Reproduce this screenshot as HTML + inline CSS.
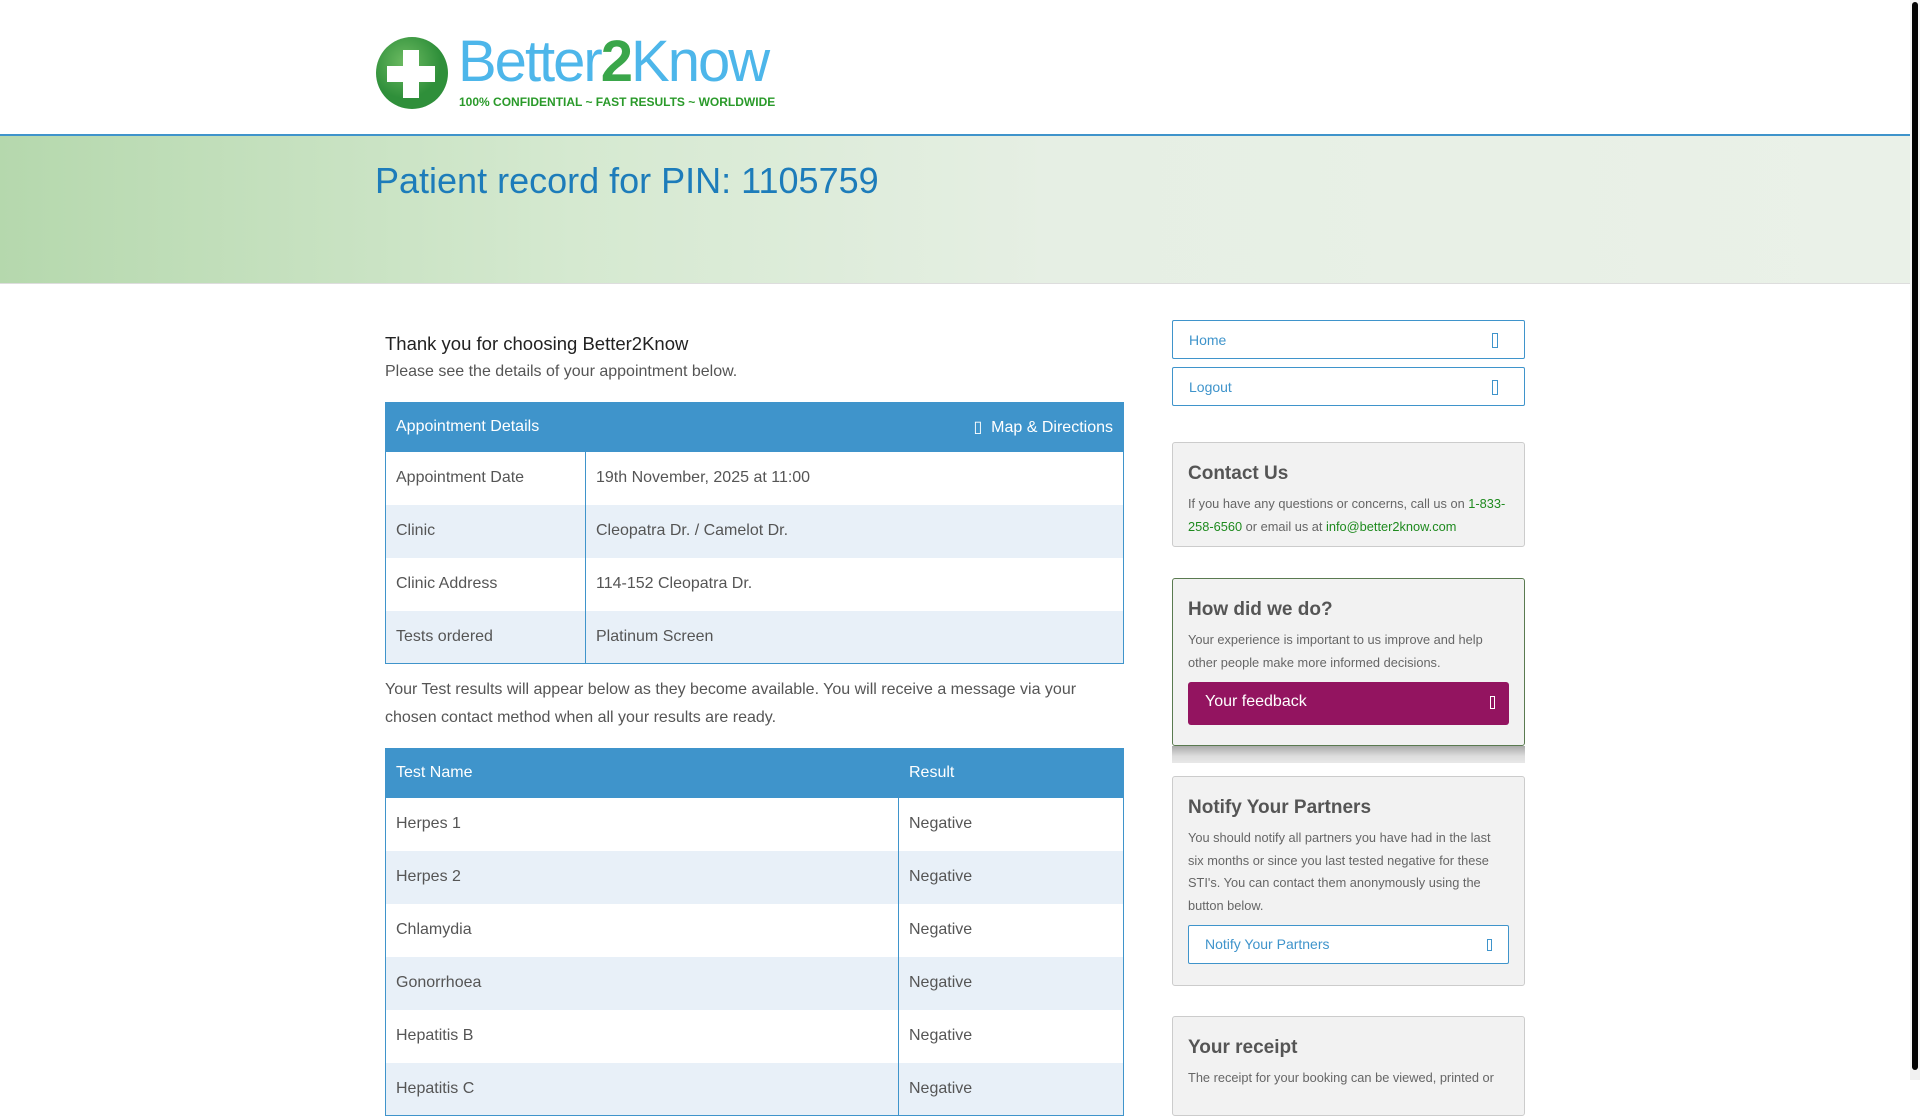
<!DOCTYPE html>
<html><head><meta charset="utf-8"><style>
*{box-sizing:border-box;margin:0;padding:0}
body{width:1920px;height:1080px;overflow:hidden;background:#fff;font-family:"Liberation Sans",Arial,sans-serif;color:#555;position:relative}
.a{position:absolute}
.sb{position:absolute;right:0;top:0;width:10px;height:1080px;background:#f1f1f1}
.sb div{position:absolute;left:2px;top:2px;width:6px;height:1068px;background:#000;border-radius:3px}
.banner{left:0;top:134px;width:1910px;height:150px;border-top:2px solid #3f94cb;border-bottom:1px solid #ddd;background:linear-gradient(90deg,#b5d8ad 0%,#d5e9d0 30%,#e6efe4 55%,#eaf1e8 100%)}
h1{position:absolute;left:375px;top:160px;font-weight:normal;font-size:36px;color:#1d7cba}
table{position:absolute;border-collapse:collapse;left:385px;width:739px;font-size:16px;color:#555}
td,th{border-left:1px solid #3f94cb;border-right:1px solid #3f94cb;padding:0 10px;height:53px;text-align:left;font-weight:normal}
th{background:#3f94cb;color:#fff;height:49px;border-top:1px solid #3f94cb}
tr:last-child td{border-bottom:1px solid #3f94cb}
.btn{position:absolute;left:1172px;width:353px;height:39px;border:1.5px solid #3f94cb;border-radius:2px;color:#3f94cb;font-size:14px;padding:11px 16px;background:#fff}
.ic{position:absolute;right:26px;top:12px;width:6px;height:15px;border:1px solid currentColor}
.bx{position:absolute;left:1172px;width:353px;background:#f2f2f2;border:1px solid #ccc;border-radius:3px;padding:0 15px}
.bx h3{font-size:19px;color:#555;margin-top:20px;margin-bottom:8px}
.bx p{font-size:12.8px;line-height:22.6px;color:#666}
.g{color:#1e8a1e}
</style></head><body>
<div class="sb"><div></div></div>
<svg class="a" style="left:375px;top:36px" width="75" height="75" viewBox="0 0 75 75"><defs><radialGradient id="r" cx="0.4" cy="0.35"><stop offset="0" stop-color="#6dbb62"/><stop offset="1" stop-color="#2f8f3a"/></radialGradient></defs><circle cx="37" cy="37" r="36" fill="url(#r)"/><path d="M28 14h16v16h16v16H44v16H28V46H12V30h16z" fill="#fff"/></svg>
<div class="a" style="left:458px;top:30px;font-size:58px;color:#4db6ea;letter-spacing:-2px;line-height:64px">Better<b style="color:#3aa64a;font-weight:bold">2</b>Know</div>
<div class="a" style="left:459px;top:95px;font-size:12px;font-weight:bold;color:#2a9a2a">100% CONFIDENTIAL ~ FAST RESULTS ~ WORLDWIDE</div>
<div class="a banner"></div>
<h1>Patient record for PIN: 1105759</h1>
<div class="a" style="left:385px;top:333px;font-size:18.5px;color:#222">Thank you for choosing Better2Know</div>
<div class="a" style="left:385px;top:363px;font-size:16px">Please see the details of your appointment below.</div>
<table style="top:402px"><tr><th style="width:200px">Appointment Details</th><th style="text-align:right">▯&nbsp; Map &amp; Directions</th></tr>
<tr><td style="background:#fff">Appointment Date</td><td style="background:#fff">19th November, 2025 at 11:00</td></tr>
<tr><td style="background:#e8f0f8">Clinic</td><td style="background:#e8f0f8">Cleopatra Dr. / Camelot Dr.</td></tr>
<tr><td style="background:#fff">Clinic Address</td><td style="background:#fff">114-152 Cleopatra Dr.</td></tr>
<tr><td style="background:#e8f0f8">Tests ordered</td><td style="background:#e8f0f8">Platinum Screen</td></tr></table>
<div class="a" style="left:385px;top:676px;width:739px;font-size:16px;line-height:28px">Your Test results will appear below as they become available. You will receive a message via your chosen contact method when all your results are ready.</div>
<table style="top:748px"><tr><th style="width:513px">Test Name</th><th>Result</th></tr>
<tr><td style="background:#fff">Herpes 1</td><td style="background:#fff">Negative</td></tr>
<tr><td style="background:#e8f0f8">Herpes 2</td><td style="background:#e8f0f8">Negative</td></tr>
<tr><td style="background:#fff">Chlamydia</td><td style="background:#fff">Negative</td></tr>
<tr><td style="background:#e8f0f8">Gonorrhoea</td><td style="background:#e8f0f8">Negative</td></tr>
<tr><td style="background:#fff">Hepatitis B</td><td style="background:#fff">Negative</td></tr>
<tr><td style="background:#e8f0f8">Hepatitis C</td><td style="background:#e8f0f8">Negative</td></tr></table>
<div class="btn" style="top:320px">Home<span class="ic"></span></div>
<div class="btn" style="top:367px">Logout<span class="ic"></span></div>
<div class="bx" style="top:442px;height:105px"><h3>Contact Us</h3><p>If you have any questions or concerns, call us on <span class="g">1-833-258-6560</span> or email us at <span class="g">info@better2know.com</span></p></div>
<div class="a" style="left:1172px;top:746px;width:353px;height:17px;background:linear-gradient(#aaa,#ddd 60%,#e8e8e8)"></div>
<div class="bx" style="top:578px;height:168px;border-color:#5a7a50"><h3>How did we do?</h3><p>Your experience is important to us improve and help other people make more informed decisions.</p>
<div style="position:relative;margin-top:8px;height:43px;background:#931460;border-radius:3px;color:#fff;font-size:16px;padding:11px 17px">Your feedback<span class="ic" style="right:14px;top:14px;width:5px;height:13px;border-color:#fff"></span></div></div>
<div class="bx" style="top:776px;height:210px"><h3>Notify Your Partners</h3><p>You should notify all partners you have had in the last six months or since you last tested negative for these STI's. You can contact them anonymously using the button below.</p>
<div style="position:relative;margin-top:8px;height:39px;background:#fff;border:1.5px solid #3f94cb;border-radius:2px;color:#3f94cb;font-size:14px;padding:10px 16px">Notify Your Partners<span class="ic" style="right:16px;top:13px;width:5px;height:12px"></span></div></div>
<div class="bx" style="top:1016px;height:100px"><h3>Your receipt</h3><p>The receipt for your booking can be viewed, printed or</p></div>
</body></html>
